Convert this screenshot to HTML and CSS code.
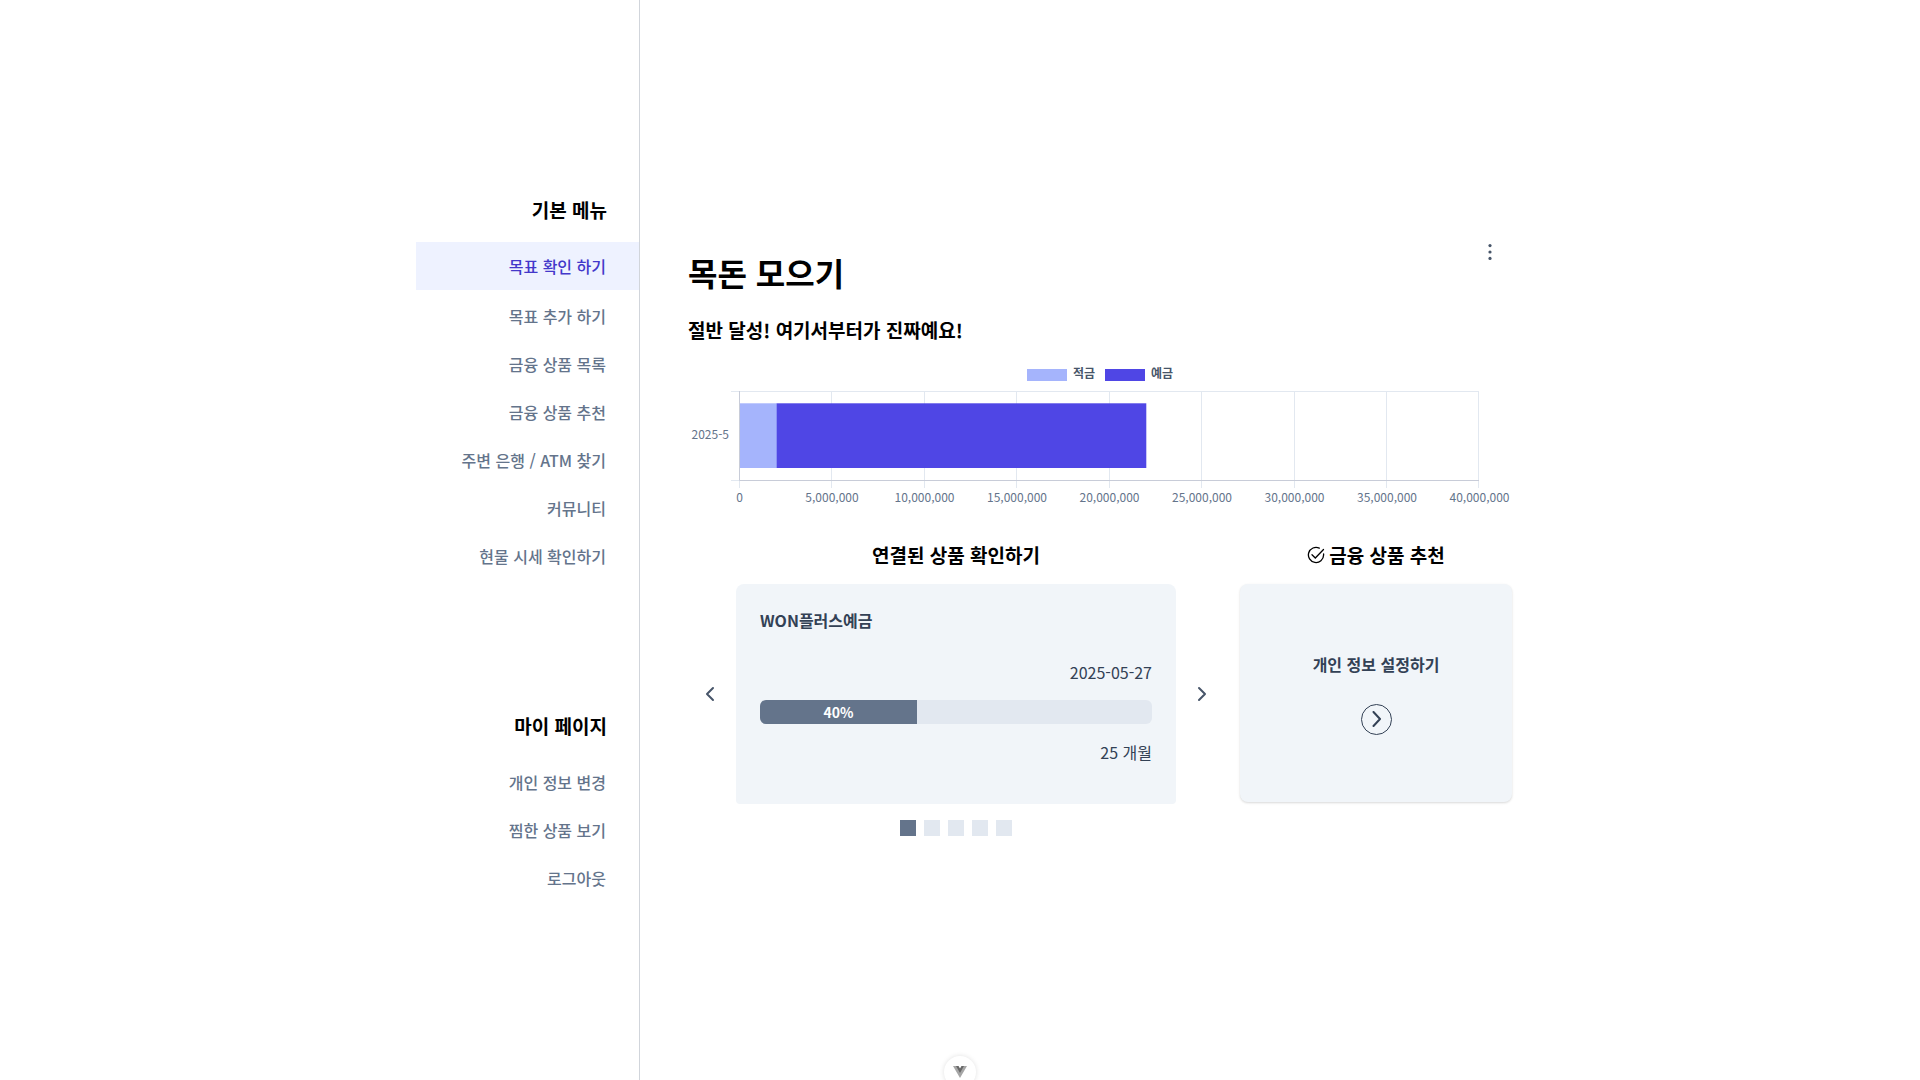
FILE: index.html
```html
<!DOCTYPE html>
<html lang="ko">
<head>
<meta charset="utf-8">
<meta name="viewport" content="width=device-width, initial-scale=1">
<title>목돈 모으기</title>
<link rel="stylesheet" href="styles.css">
</head>
<body>
<div class="layout">
  <aside class="sidebar">
    <nav class="menu" aria-labelledby="menu-basic">
      <h2 class="menu-title" id="menu-basic">기본 메뉴</h2>
      <ul class="menu-list">
        <li><a class="menu-link active" href="#goals">목표 확인 하기</a></li>
        <li><a class="menu-link" href="#add">목표 추가 하기</a></li>
        <li><a class="menu-link" href="#products">금융 상품 목록</a></li>
        <li><a class="menu-link" href="#recommend">금융 상품 추천</a></li>
        <li><a class="menu-link" href="#map">주변 은행 / ATM 찾기</a></li>
        <li><a class="menu-link" href="#community">커뮤니티</a></li>
        <li><a class="menu-link" href="#prices">현물 시세 확인하기</a></li>
      </ul>
    </nav>
    <nav class="menu" aria-labelledby="menu-my">
      <h2 class="menu-title" id="menu-my">마이 페이지</h2>
      <ul class="menu-list">
        <li><a class="menu-link" href="#profile">개인 정보 변경</a></li>
        <li><a class="menu-link" href="#saved">찜한 상품 보기</a></li>
        <li><a class="menu-link" href="#logout">로그아웃</a></li>
      </ul>
    </nav>
  </aside>

  <main class="content">
    <header class="goal-header">
      <h1 class="goal-title">목돈 모으기</h1>
      <button class="icon-button more" type="button" aria-label="더보기">
        <svg width="16" height="16" viewBox="0 0 16 16" fill="currentColor"><circle cx="8" cy="1.600" r="1.600"/><circle cx="8" cy="8" r="1.600"/><circle cx="8" cy="14.400" r="1.600"/></svg>
      </button>
    </header>
    <p class="goal-message">절반 달성! 여기서부터가 진짜예요!</p>

    <svg class="chart" viewBox="0 0 824 160" role="img" aria-label="적금과 예금 합계">
      <rect class="bar-light" x="339" y="9" width="40" height="12"/>
      <text class="legend" x="385" y="18">적금</text>
      <rect class="bar-dark" x="417" y="9" width="40" height="12"/>
      <text class="legend" x="463" y="18">예금</text>
      <g class="grid">
        <path d="M43 31.500H791M43 120.500H51"/>
        <path d="M143.500 31V128M236.500 31V128M328.500 31V128M421.500 31V128M513.500 31V128M606.500 31V128M698.500 31V128M790.500 31V128M51.500 120V128"/>
      </g>
      <path class="axis" d="M51.500 31V120.500H791"/>
      <rect class="bar-light" x="52" y="43.300" width="37" height="64.700"/>
      <rect class="bar-dark" x="88.700" y="43.300" width="369.600" height="64.700"/>
      <text class="tick end" x="41" y="79">2025-5</text>
      <g class="tick">
        <text x="51.500" y="142">0</text>
        <text x="144" y="142">5,000,000</text>
        <text x="236.500" y="142">10,000,000</text>
        <text x="329" y="142">15,000,000</text>
        <text x="421.500" y="142">20,000,000</text>
        <text x="514" y="142">25,000,000</text>
        <text x="606.500" y="142">30,000,000</text>
        <text x="699" y="142">35,000,000</text>
        <text x="791.500" y="142">40,000,000</text>
      </g>
    </svg>

    <div class="panels">
      <section class="linked">
        <h2 class="panel-title">연결된 상품 확인하기</h2>
        <div class="carousel">
          <button class="icon-button" type="button" aria-label="이전">
            <svg width="16" height="16" viewBox="0 0 16 16" class="chevron"><path d="M9 2L3 8L9 14"/></svg>
          </button>
          <article class="product">
            <h3 class="card-title">WON플러스예금</h3>
            <p class="date">2025-05-27</p>
            <div class="progress" role="progressbar" aria-label="진행률" aria-valuenow="40" aria-valuemin="0" aria-valuemax="100">
              <div class="progress-value" style="width: 40%">40%</div>
            </div>
            <p class="term">25 개월</p>
          </article>
          <button class="icon-button" type="button" aria-label="다음">
            <svg width="16" height="16" viewBox="0 0 16 16" class="chevron"><path d="M7 2L13 8L7 14"/></svg>
          </button>
        </div>
        <div class="dots">
          <button class="dot current" type="button" aria-label="1"></button>
          <button class="dot" type="button" aria-label="2"></button>
          <button class="dot" type="button" aria-label="3"></button>
          <button class="dot" type="button" aria-label="4"></button>
          <button class="dot" type="button" aria-label="5"></button>
        </div>
      </section>
      <section class="recommend">
        <h2 class="panel-title">
          <svg width="18" height="18" viewBox="0 0 18 18" class="check"><path d="M16.600 8V9a7.600 7.600 0 1 1-4.300-6.900"/><path d="M5 8.800L8.300 12L16.500 3.500"/></svg>
          금융 상품 추천
        </h2>
        <a class="suggestion" href="#profile">
          <span class="card-title">개인 정보 설정하기</span>
          <span class="round-arrow"><svg width="16" height="16" viewBox="0 0 16 16" class="chevron"><path d="M5.500 1L12 8L5.500 15"/></svg></span>
        </a>
      </section>
    </div>
  </main>
</div>
<button class="devtools" type="button" aria-label="Vue DevTools">
  <svg width="14" height="12" viewBox="0 0 14 12"><path fill="#a6a6a6" d="M0 0H5L7 3.500L9 0H14L7 12Z"/><path fill="#686868" d="M3 0H5.500L7 2.500L8.500 0H11L7 7Z"/></svg>
</button>
</body>
</html>
```
FILE: styles.css
```css
* {
  box-sizing: border-box;
}

body,
h1,
h2,
h3,
p,
ul {
  margin: 0;
  padding: 0;
}

body {
  font-family: "Noto Sans CJK KR", sans-serif;
  font-size: 16px;
  line-height: 24px;
  color: #000;
  background: #fff;
}

button {
  padding: 0;
  border: 0;
  background: none;
  color: inherit;
  font: inherit;
  cursor: pointer;
}

a {
  color: inherit;
  text-decoration: none;
}

svg {
  display: block;
}

.layout {
  display: flex;
  max-width: 1120px;
  min-height: 100vh;
  margin: 0 auto;
  padding: 0 8px 0 16px;
}

.sidebar {
  display: flex;
  flex: 0 0 224px;
  flex-direction: column;
  justify-content: center;
  gap: 132px;
  padding-top: 18px;
  border-right: 1px solid #d1d5db;
  text-align: right;
}

.menu-title {
  padding-right: 32px;
  margin-bottom: 18px;
  font-size: 19px;
  line-height: 28px;
}

.menu-list {
  list-style: none;
}

.menu-link {
  display: block;
  padding: 12px 33px 12px 16px;
  color: #64748b;
  font-weight: 500;
}

.menu-link.active {
  margin-bottom: 2px;
  background: #eef2ff;
  color: #4338ca;
}

.content {
  display: flex;
  flex: 1;
  flex-direction: column;
  justify-content: center;
  min-width: 0;
  padding-left: 48px;
}

.goal-header {
  display: flex;
  align-items: flex-start;
  justify-content: space-between;
}

.goal-title {
  padding-top: 4px;
  font-size: 32px;
  line-height: 48px;
}

.icon-button {
  display: grid;
  place-items: center;
  color: #475569;
}

.more {
  width: 44px;
  height: 16px;
}

.goal-message {
  margin: 20px 0 16px;
  font-size: 19px;
  font-weight: 700;
  line-height: 28px;
}

.chart {
  width: 100%;
  overflow: visible;
}

.bar-light {
  fill: #a5b4fc;
}

.bar-dark {
  fill: #4f46e5;
}

.grid {
  fill: none;
  stroke: #e2e8f0;
}

.axis {
  fill: none;
  stroke: #c8ccd8;
}

.tick,
.legend {
  font-size: 12px;
  fill: #64748b;
}

.tick {
  text-anchor: middle;
}

.tick.end {
  text-anchor: end;
}

.legend {
  font-weight: 700;
  fill: #475569;
}

.panels {
  display: grid;
  grid-template-columns: minmax(0, 1fr) 272px;
  gap: 16px;
  margin-top: 21px;
}

.panel-title {
  display: flex;
  align-items: center;
  justify-content: center;
  gap: 4px;
  margin-bottom: 15px;
  font-size: 19px;
  line-height: 28px;
}

.carousel {
  display: grid;
  grid-template-columns: 48px minmax(0, 1fr) 48px;
}

.product {
  min-height: 220px;
  padding: 24px;
  border-radius: 8px 8px 4px 4px;
  background: #f1f5f9;
  color: #334155;
}

.card-title {
  font-size: 16px;
  font-weight: 700;
}

.date {
  margin: 28px 0 16px;
  text-align: right;
}

.progress {
  height: 24px;
  overflow: hidden;
  border-radius: 6px;
  background: #e2e8f0;
}

.progress-value {
  background: #64748b;
  color: #fff;
  font-size: 14px;
  font-weight: 700;
  text-align: center;
}

.term {
  margin-top: 16px;
  text-align: right;
}

.dots {
  display: flex;
  justify-content: center;
  gap: 8px;
  margin-top: 16px;
}

.dot {
  width: 16px;
  height: 16px;
  background: #e2e8f0;
}

.dot.current {
  background: #64748b;
}

.chevron {
  fill: none;
  stroke: currentColor;
  stroke-width: 2;
  stroke-linecap: round;
  stroke-linejoin: round;
}

.check {
  fill: none;
  stroke: currentColor;
  stroke-width: 1.3;
  stroke-linecap: round;
}

.suggestion {
  display: flex;
  flex-direction: column;
  align-items: center;
  justify-content: center;
  gap: 28px;
  min-height: 218px;
  border-radius: 8px;
  background: #f1f5f9;
  box-shadow: 0 1px 3px #0000001a, 0 1px 2px #0000000f;
  color: #334155;
}

.round-arrow {
  display: grid;
  place-items: center;
  width: 31px;
  height: 31px;
  border: 1px solid #334155;
  border-radius: 50%;
}

.devtools {
  position: fixed;
  bottom: -8px;
  left: 50%;
  display: grid;
  place-items: center;
  width: 32px;
  height: 32px;
  border-radius: 50%;
  background: #fff;
  box-shadow: 0 0 5px #00000020;
  transform: translateX(-50%);
}
```
